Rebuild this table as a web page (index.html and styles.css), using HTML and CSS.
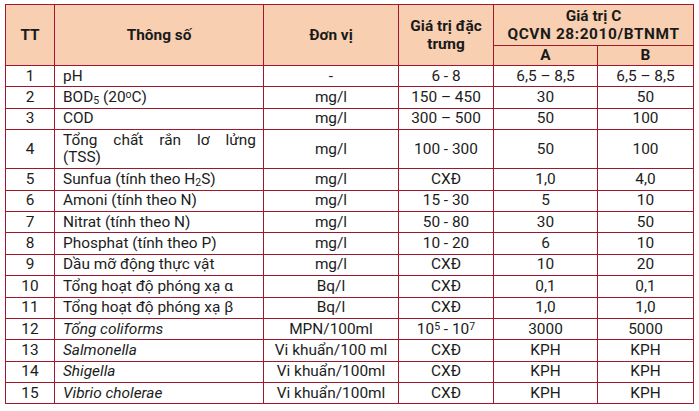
FILE: index.html
```html
<!DOCTYPE html>
<html lang="vi">
<head>
<meta charset="utf-8">
<link rel="stylesheet" href="styles.css">
</head>
<body>
<table class="tbl">
  <colgroup>
    <col class="c-tt"><col class="c-ts"><col class="c-dv"><col class="c-gt"><col class="c-a"><col class="c-b">
  </colgroup>
  <thead>
    <tr class="h1">
      <th rowspan="2">TT</th>
      <th rowspan="2">Thông số</th>
      <th rowspan="2">Đơn vị</th>
      <th rowspan="2">Giá trị đặc<br>trưng</th>
      <th colspan="2">Giá trị C<br><span class="qc">QCVN 28:2010/BTNMT</span></th>
    </tr>
    <tr class="h2">
      <th>A</th>
      <th>B</th>
    </tr>
  </thead>
  <tbody>
    <tr><td>1</td><td class="name">pH</td><td>-</td><td>6 - 8</td><td>6,5 – 8,5</td><td>6,5 – 8,5</td></tr>
    <tr><td>2</td><td class="name">BOD<sub>5</sub> (20<sup>o</sup>C)</td><td>mg/l</td><td>150 – 450</td><td>30</td><td>50</td></tr>
    <tr><td>3</td><td class="name">COD</td><td>mg/l</td><td>300 – 500</td><td>50</td><td>100</td></tr>
    <tr class="tall"><td>4</td><td class="name"><span class="jl">Tổng chất rắn lơ lửng</span>(TSS)</td><td>mg/l</td><td>100 - 300</td><td>50</td><td>100</td></tr>
    <tr><td>5</td><td class="name">Sunfua (tính theo H<sub>2</sub>S)</td><td>mg/l</td><td>CXĐ</td><td>1,0</td><td>4,0</td></tr>
    <tr><td>6</td><td class="name">Amoni (tính theo N)</td><td>mg/l</td><td>15 - 30</td><td>5</td><td>10</td></tr>
    <tr><td>7</td><td class="name">Nitrat (tính theo N)</td><td>mg/l</td><td>50 - 80</td><td>30</td><td>50</td></tr>
    <tr><td>8</td><td class="name">Phosphat (tính theo P)</td><td>mg/l</td><td>10 - 20</td><td>6</td><td>10</td></tr>
    <tr><td>9</td><td class="name">Dầu mỡ động thực vật</td><td>mg/l</td><td>CXĐ</td><td>10</td><td>20</td></tr>
    <tr><td>10</td><td class="name">Tổng hoạt độ phóng xạ α</td><td>Bq/l</td><td>CXĐ</td><td>0,1</td><td>0,1</td></tr>
    <tr><td>11</td><td class="name">Tổng hoạt độ phóng xạ β</td><td>Bq/l</td><td>CXĐ</td><td>1,0</td><td>1,0</td></tr>
    <tr><td>12</td><td class="name it">Tổng coliforms</td><td>MPN/100ml</td><td>10<sup>5</sup> - 10<sup>7</sup></td><td>3000</td><td>5000</td></tr>
    <tr><td>13</td><td class="name it">Salmonella</td><td>Vi khuẩn/100 ml</td><td>CXĐ</td><td>KPH</td><td>KPH</td></tr>
    <tr><td>14</td><td class="name it">Shigella</td><td>Vi khuẩn/100ml</td><td>CXĐ</td><td>KPH</td><td>KPH</td></tr>
    <tr><td>15</td><td class="name it">Vibrio cholerae</td><td>Vi khuẩn/100ml</td><td>CXĐ</td><td>KPH</td><td>KPH</td></tr>
  </tbody>
</table>
</body>
</html>
```

FILE: styles.css
```css
html, body {
  margin: 0;
  padding: 0;
  background: #ffffff;
}
body {
  padding: 4px 0 0 5px;
  font-family: Roboto, "Liberation Sans", sans-serif;
  color: #1c1c1c;
}
.tbl {
  border-collapse: collapse;
  table-layout: fixed;
  width: 689px;
  font-size: 15.4px;
  line-height: 17px;
}
.c-tt { width: 49px; }
.c-ts { width: 209px; }
.c-dv { width: 135px; }
.c-gt { width: 95px; }
.c-a { width: 104px; }
.c-b { width: 96px; }
.tbl th, .tbl td {
  border: 1px solid #a3172c;
  padding: 0 4px;
  text-align: center;
  vertical-align: middle;
  white-space: nowrap;
}
.tbl th {
  background: #f9cfb1;
  font-weight: 700;
  font-size: 15.4px;
  line-height: 18px;
  color: #1a1a1a;
}
.qc { letter-spacing: 0.6px; }
.h1 th { height: 40px; }
.h2 th { height: 19px; line-height: 17px; }
.tbl tbody tr { height: 21.4px; }
.tbl tbody tr.tall { height: 39px; }
.tbl td.name {
  text-align: left;
  padding-left: 8px;
  padding-right: 7px;
}
.jl {
  display: block;
  text-align: justify;
  text-align-last: justify;
}
.it { font-style: italic; }
sub {
  font-size: 10.5px;
  vertical-align: -2px;
  line-height: 0;
}
sup {
  font-size: 10.5px;
  vertical-align: 4px;
  line-height: 0;
}
```
